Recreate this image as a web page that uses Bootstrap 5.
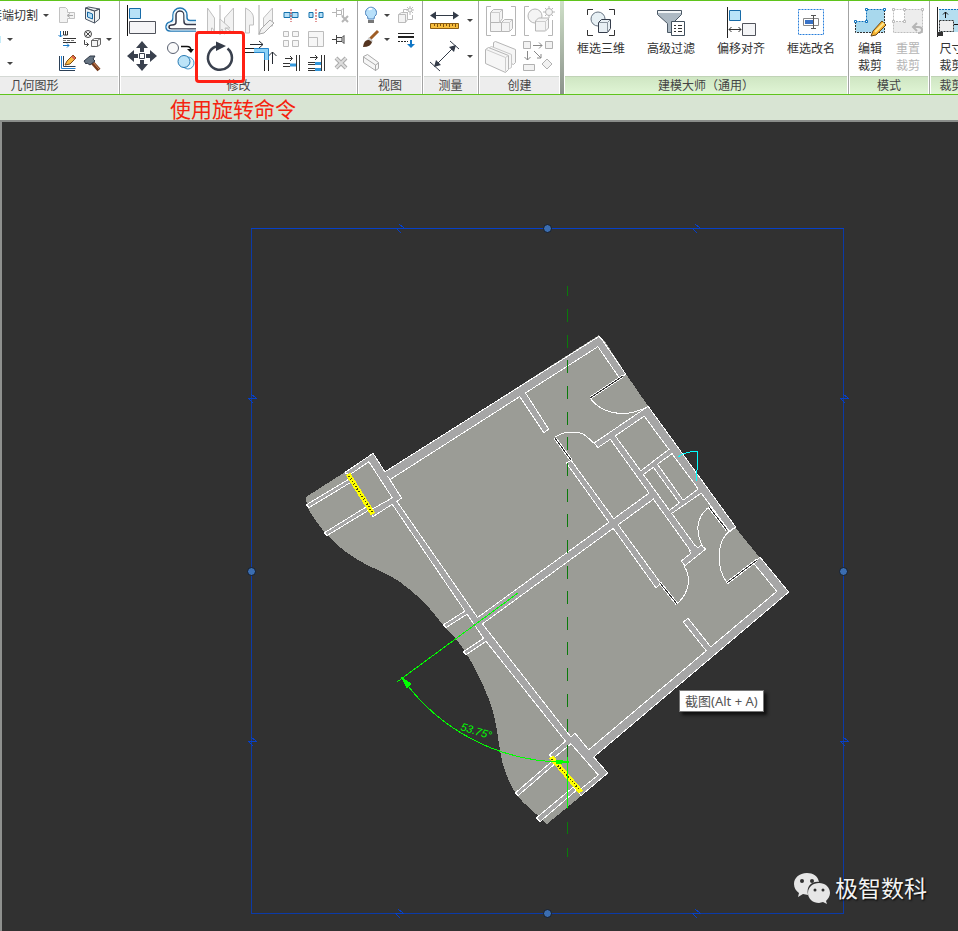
<!DOCTYPE html>
<html lang="zh-CN">
<head>
<meta charset="utf-8">
<meta name="viewport" content="width=device-width, initial-scale=1">
<title>使用旋转命令</title>
<link rel="stylesheet" href="https://cdn.jsdelivr.net/npm/bootstrap@5.3.0/dist/css/bootstrap.min.css">
<style>
body{font-family:"Noto Sans","Noto Sans CJK SC",sans-serif;font-size:12px;line-height:17px;color:#333;background:#313131}
.ribbon{border-top:1px solid #5fc41c;border-bottom:1px solid #5fc41c;height:95px;background:#fff}
.panel{border-right:1px solid #a3a3a3}
.panel-body{height:75px;padding:1px 2px 0;display:flex;align-items:flex-start}
.panel-title{height:18px;margin:0 1px;background:#ededed;border-top:1px solid #d5d9d5;white-space:nowrap;color:#444}
.green .panel-title{background:linear-gradient(#cfe6c3,#e0f5d5);border-top-color:#c0d3b6}
.p-geo{width:170px;margin-left:-50px}
.p-mod{width:238px}
.p-view{width:65px}
.p-measure{width:56px}
.p-create{width:81px;border-right:0}
.p-master{width:285px}
.p-mode{width:81px}
.p-size{width:44px}
.divider{width:4px;background:linear-gradient(#cfe0c8,#8b928b)}
.tool{border:0;background:none;padding:0;color:inherit;display:flex;align-items:center;justify-content:center}
.tool svg,.labelled svg{display:block;overflow:visible}
.grid-big{display:grid;grid-template-columns:repeat(4,39px);grid-auto-rows:36px}
.grid-two{display:grid;grid-template-columns:repeat(2,38px);grid-auto-rows:36px}
.grid-small{display:grid;grid-template-columns:repeat(3,25px);grid-auto-rows:24px;padding-top:1px}
.grid-view{display:grid;grid-template-columns:20px 12px 26px;grid-auto-rows:24px;padding-top:1px}
.cut-list{width:102px;padding-top:1px}
.cut-row{height:24px}
.cut-row .menu-btn{width:16px}
.cut-row.short{padding-right:36px}
.grid-geo{display:grid;grid-template-columns:25px 25px 10px;grid-auto-rows:24px;padding-top:1px}
.grid-measure{display:grid;grid-template-columns:38px 12px;grid-auto-rows:36px}
.labelled{border:0;background:none;padding:4px 0 0;color:inherit;line-height:17px}
.labelled svg{margin:0 auto 2px}
.w70{width:70px}.w38{width:38px}
.off{color:#b5b5b5}
.caret{width:0;height:0;border:3px solid transparent;border-top-color:#444;border-bottom:0}
.picked{position:relative}
.picked::after{content:"";position:absolute;left:-5px;top:-7px;width:50px;height:52px;border:3px solid #ff2014;border-radius:4px;z-index:2}
.hint{height:27px;background:#d8e4d3;border-bottom:2px solid #8a8d8a;color:#f5230f;font-size:21px;line-height:28px;padding-left:170px}
.stage{position:relative;border-left:2px solid #8f918f;background:#313131}
.tip{position:absolute;left:677px;top:568px;border:1px solid #777;background:#fff;color:#555;font-size:13px;line-height:18px;padding:1px 5px;box-shadow:3px 3px 3px #111;white-space:nowrap}
.brand{position:absolute;right:31px;bottom:25px;font-size:23px;line-height:36px;color:#f2f2f2;text-shadow:1px 1px 2px #000}
</style>
<script src="https://cdn.jsdelivr.net/npm/bootstrap@5.3.0/dist/js/bootstrap.bundle.min.js"></script>
</head>
<body class="d-flex flex-column min-vh-100">
<header class="ribbon d-flex overflow-hidden flex-shrink-0">
 <section class="panel p-geo flex-shrink-0">
  <div class="panel-body">
   <div class="cut-list flex-shrink-0">
    <div class="cut-row d-flex justify-content-end">
     <button class="tool text-nowrap">连接端切割</button>
     <button class="tool menu-btn" aria-label="切割选项"><span class="caret"></span></button>
    </div>
    <div class="cut-row short d-flex justify-content-end">
     <button class="tool" aria-label="剪切"><svg width="16" height="16"><path d="M4 5h10v7H4z" fill="#bfeaf8" stroke="#8cd8f0"/></svg></button>
     <button class="tool menu-btn" aria-label="剪切选项"><span class="caret"></span></button>
    </div>
    <div class="cut-row short d-flex justify-content-end">
     <button class="tool" aria-label="连接"><svg width="16" height="16"><path d="M4 4.500h10M4 8.500h10M4 12.500h10" stroke="#1b6daf"/></svg></button>
     <button class="tool menu-btn" aria-label="连接选项"><span class="caret"></span></button>
    </div>
   </div>
   <div class="grid-geo">
    <button class="tool" aria-label="拆分面"><svg width="20" height="20" fill="#f3f3f3" stroke="#c2c2c2"><path d="M2.500 2.500h6l2 2v3h7v6h-7v4h-8z"/><path d="M16 10.500h-5m2-2l-3 2 3 2" fill="none" stroke="#aaa"/></svg></button>
    <button class="tool" aria-label="洞口"><svg width="20" height="20"><path d="M3.500 3l9 3v12l-9-4zM3.500 3l3-1 11 2-5 2zM12.500 6l5-2v10l-5 4z" fill="#eef1f2" stroke="#4b5563"/><path d="M5.500 7l5 2v5l-5-2z" fill="#b5def5" stroke="#1467a5"/></svg></button>
    <span></span>
    <button class="tool" aria-label="梁连接"><svg width="20" height="20" fill="none"><path d="M3.500 2v6m-2-2l2 2 2-2M6 16.500h6m-2-2l2 2-2 2" stroke="#1678c8"/><path d="M6.500 2v4h4V2m-2 0v4M6 9.500h13M6 13.500h13" stroke="#333"/><path d="M6 11.500h12" stroke="#777" stroke-dasharray="3 1"/></svg></button>
    <button class="tool" aria-label="墙连接"><svg width="20" height="20" fill="#f5f5f5" stroke="#444"><circle cx="6" cy="5" r="3.500"/><path d="M3.500 2.500l5 5M8.500 2.500l-5 5M2.500 11v4.500h4m-2-2l2 2-2 2" fill="none"/><path d="M9.500 11.500l3-2h6v6l-3 2h-6zM9.500 11.500h6v6m0-6l3-2" stroke="#666"/></svg></button>
    <button class="tool" aria-label="墙连接选项"><span class="caret"></span></button>
    <button class="tool" aria-label="编辑连接"><svg width="20" height="20" fill="none"><path d="M2.500 3v14.500H18M6.500 3v10.500h12" stroke="#2b3f56"/><path d="M4.500 3v12.500h14" stroke="#2183d5"/><path d="M8 12l2-4 6-6 3 3-6 6z" fill="#f7bb46" stroke="#7e4c13"/><path d="M15 3l3 3" stroke="#d85b51" stroke-width="2"/></svg></button>
    <button class="tool" aria-label="拆除"><svg width="20" height="20"><path d="M9 8l8 9" stroke="#753b1e" stroke-width="4"/><path d="M10 8l7 8" stroke="#d89160"/><path d="M2 8l6-5h5l-2 3 2 2-5 4-3-2-1 1z" fill="#667482" stroke="#303947"/></svg></button>
   </div>
  </div>
  <div class="panel-title text-center">几何图形</div>
 </section>

 <section class="panel p-mod flex-shrink-0">
  <div class="panel-body">
   <div class="grid-big flex-shrink-0">
    <button class="tool" aria-label="对齐"><svg width="36" height="36"><path d="M3.500 3v31" stroke="#111"/><path d="M5.500 6.500h11v10h-11z" fill="#b8e2f7" stroke="#176ba8"/><path d="M5.500 19.500h26v12h-26z" fill="#f5f5f7" stroke="#50535b"/></svg></button>
    <button class="tool" aria-label="偏移"><svg width="36" height="36" fill="none"><path d="M33 18.500h-6q-3 0-3-3V13a7 7 0 0 0-14 0v3q0 3-3 4-4 1-4 5 0 4 4 4h26" stroke="#2378b5" stroke-width="1.500"/><path d="M33 22.500h-9q-3 0-3-3V13a4 4 0 0 0-8 0v7q0 3-4 3-3 0-3 2t3 2h24" stroke="#35394a" stroke-width="1.500"/><path d="M33 20.500h-8q-3 0-3-3V13a5.500 5.500 0 0 0-11 0v6q0 2-4 2-3 1-3 4 0 3 4 3h25" stroke="#def1fb"/></svg></button>
    <button class="tool" aria-label="镜像 拾取轴"><svg width="36" height="36" fill="#f2f2f2" stroke="#c0c0c0"><path d="M5.500 6l7 10v14l-2-4h-1v5h-4zM31.500 6l-9 10v9l9 6z"/><path d="M18 3v30" stroke="#aaa"/><path d="M18 17l10 9h-5l2 5-3 1-2-5-2 3z"/></svg></button>
    <button class="tool" aria-label="镜像 绘制轴"><svg width="36" height="36" fill="#f2f2f2" stroke="#c0c0c0"><path d="M4.500 6q8 4 8 10v7h-4v8h-4zM31.500 6l-9 10v8h9z"/><path d="M18 3v30" stroke="#aaa"/><path d="M18 32l2-5 9-9 4 3-10 10z" stroke="#aaa"/></svg></button>
    <button class="tool" aria-label="移动"><svg width="36" height="36" fill="#3a414e"><path d="M18 3l6 7h-4v4h-4v-4h-4zM18 33l6-7h-4v-4h-4v4h-4zM3 18l7-6v4h4v4h-4v4zM33 18l-7-6v4h-4v4h4v4z"/><path d="M15.500 15.500h5v5h-5z" fill="#fff" stroke="#3a414e"/></svg></button>
    <button class="tool" aria-label="复制"><svg width="36" height="36" fill="none"><circle cx="10" cy="10" r="5.500" fill="#fafafa" stroke="#596070"/><path d="M18 8.500h6q4 0 4 4" stroke="#111" stroke-width="1.500"/><path d="M24 11h7l-3 4z" fill="#111"/><circle cx="25" cy="25" r="6" fill="#e9f8ff" stroke="#4996c9"/><circle cx="21" cy="23.500" r="6" fill="#bce4f8" stroke="#2478b2"/></svg></button>
    <button class="tool picked" aria-label="旋转"><svg width="36" height="36"><path d="M25.500 10.500A12 12 0 1 1 14 8.500" fill="none" stroke="#3a414e" stroke-width="2.500"/><path d="M14 3.500l10 4.500-10 5z" fill="#343b48"/></svg></button>
    <button class="tool" aria-label="修剪"><svg width="36" height="36" fill="none"><path d="M9 6.500h13M18 3l4 3.500-4 3.500M31.500 26V14m-4 4l4-4 4 4" stroke="#252a32"/><path d="M2 10.500h11M2 14.500h11M23.500 22v11M27.500 22v11" stroke="#222"/><path d="M13 12.500h12.500V22" stroke="#8bd1f6" stroke-width="4"/><path d="M13 10.500h14.500V22M13 14.500h10.500V22" stroke="#2684c9"/></svg></button>
   </div>
   <div class="grid-small flex-shrink-0">
    <button class="tool" aria-label="拆分图元"><svg width="18" height="18"><path d="M2 6.500h6v5H2zM10 6.500h6v5h-6z" fill="#b6e0f7" stroke="#1672ad"/><path d="M9 3v13" stroke="#c43030" stroke-dasharray="2 1"/></svg></button>
    <button class="tool" aria-label="用间隙拆分"><svg width="18" height="18"><path d="M2 6.500h4v5H2zM12 6.500h4v5h-4z" fill="#b6e0f7" stroke="#1672ad"/><path d="M9 3v13" stroke="#c43030" stroke-dasharray="2 1"/></svg></button>
    <button class="tool" aria-label="解锁"><svg width="20" height="20" fill="none" stroke="#b6b6b6"><path d="M1 7.500h4M5.500 3v9M5.500 5.500h5v4h-5M12.500 3v9M10 5.500l2-2M10 9.500l2 2"/><path d="M11 11l6 6m0-6l-6 6" stroke-width="2"/></svg></button>
    <button class="tool" aria-label="阵列"><svg width="18" height="18" fill="#f6f6f6" stroke="#bcbcbc"><path d="M1.500 1.500h5v5h-5zM10.500 1.500h6v5h-6zM1.500 10.500h5v6h-5zM10.500 10.500h6v6h-6z"/></svg></button>
    <button class="tool" aria-label="缩放"><svg width="18" height="18" fill="#f6f6f6" stroke="#bcbcbc"><path d="M1.500 1.500h15v15h-15zM1.500 7.500h9v9h-9z"/></svg></button>
    <button class="tool" aria-label="锁定"><svg width="18" height="18" fill="#eee" stroke="#444"><path d="M0 9.500h4M4.500 5v9M5 7.500h5v4H5M10 7.500l2-2v8l-2-2"/></svg></button>
    <button class="tool" aria-label="修剪单个图元"><svg width="18" height="18" fill="none"><path d="M3 4.500h7M8 2l2.500 2.500L8 7M1 9.500h7M1 12.500h7M14.500 1v16M17.500 1v16" stroke="#333"/><path d="M8 11h6" stroke="#3498dc" stroke-width="3"/></svg></button>
    <button class="tool" aria-label="修剪多个图元"><svg width="18" height="18" fill="none"><path d="M3 3.500h7M8 1l2.500 2.500L8 6M1 8.500h7M1 10.500h7M1 14.500h7M1 16.500h7M14.500 1v16M17.500 1v16" stroke="#333"/><path d="M8 9.500h6M8 15.500h6" stroke="#3498dc" stroke-width="3"/></svg></button>
    <button class="tool" aria-label="删除"><svg width="18" height="18"><path d="M4 4l10 10m0-10L4 14" stroke="#aaa" stroke-width="4"/><path d="M4 4l10 10m0-10L4 14" stroke="#ddd" stroke-width="2"/></svg></button>
   </div>
  </div>
  <div class="panel-title text-center">修改</div>
 </section>

 <section class="panel p-view flex-shrink-0">
  <div class="panel-body justify-content-center"><div class="grid-view">
   <button class="tool" aria-label="隐藏"><svg width="20" height="20"><path d="M7 14q0-3-2-4a5.500 5.500 0 1 1 10 0q-2 1-2 4z" fill="#b8e0fa" stroke="#4c83bd"/><path d="M8 5q1-2 3-1" stroke="#fff" stroke-width="2" fill="none"/><path d="M7 15h6v3H7z" fill="#777"/></svg></button>
   <button class="tool" aria-label="隐藏选项"><span class="caret"></span></button>
   <button class="tool" aria-label="置换"><svg width="20" height="20" fill="#f3f3f3" stroke="#bcbcbc"><path d="M2.500 9.500l3-2h6v7l-2 3h-7zM2.500 9.500h7v8"/><path d="M7.500 7V4.500h5M16.500 10v4.500h-5" fill="none"/><path d="M14 1v9m-4-5h8m-7-3l6 6m0-6l-6 6" fill="none"/><circle cx="14" cy="5" r="2"/></svg></button>
   <button class="tool" aria-label="替换"><svg width="20" height="20"><path d="M9 10l8-8" stroke="#9f5d25" stroke-width="3"/><path d="M8 8l4 4-2 2-4-3z" fill="#ccc"/><path d="M2 18q1-8 6-7l3 2q-1 5-9 5z" fill="#54341f"/></svg></button>
   <button class="tool" aria-label="替换选项"><span class="caret"></span></button>
   <button class="tool" aria-label="线处理"><svg width="20" height="20"><path d="M2 4.500h16" stroke="#222"/><path d="M2 8h16" stroke="#222" stroke-width="2"/><path d="M2 12.500h10" stroke="#222" stroke-dasharray="2 1"/><path d="M14 11h2v4h3l-4 4-4-4h3z" fill="#1177c5"/></svg></button>
   <button class="tool" aria-label="选择框"><svg width="20" height="20" fill="#f6f6f6" stroke="#aaa"><path d="M2.500 3.500l4-2 11 8v6l-3 2-12-8zM2.500 4l12 8v6m0-6l3-2"/></svg></button>
  </div></div>
  <div class="panel-title text-center">视图</div>
 </section>

 <section class="panel p-measure flex-shrink-0">
  <div class="panel-body justify-content-center"><div class="grid-measure">
   <button class="tool" aria-label="测量"><svg width="36" height="36"><path d="M6 13.500h24" stroke="#333b48"/><path d="M3 13.500l6-4v8zM32 13.500l-6-4v8z" fill="#333b48"/><path d="M3.500 21.500h28v5h-28z" fill="#f7bd3d" stroke="#8b5c12"/><path d="M7.500 22v2m3-2v3m3-3v2m3-2v3m3-3v2m3-2v3m3-3v2m3-2v3" stroke="#80530e"/></svg></button>
   <button class="tool" aria-label="测量选项"><span class="caret"></span></button>
   <button class="tool" aria-label="对齐尺寸标注"><svg width="36" height="36"><path d="M9 27L27 9M3 24l10 9M23 3l9 8" stroke="#333b48"/><path d="M7 29l2-7 5 5zM29 7l-7 2 5 5z" fill="#333b48"/></svg></button>
   <button class="tool" aria-label="尺寸标注选项"><span class="caret"></span></button>
  </div></div>
  <div class="panel-title text-center">测量</div>
 </section>

 <section class="panel p-create flex-shrink-0">
  <div class="panel-body justify-content-center"><div class="grid-two">
   <button class="tool" aria-label="创建部件"><svg width="34" height="36" fill="#f4f4f4" stroke="#b6b6b6"><path d="M7 4.500H2.500v29H7M27 4.500h4.500v29H27" fill="none"/><path d="M6.500 10.500l3-3h9v9l-3 4h-9zM6.500 20.500h11v9h-11zM17.500 20.500l3-3h8v9l-3 3h-8z"/><path d="M7 10.500h8.500v10M18 20.500h7.500v9M15.500 10.500l3-3M25.500 20.500l3-3" fill="none" stroke="#ccc"/></svg></button>
   <button class="tool" aria-label="创建组"><svg width="34" height="36" fill="#f4f4f4" stroke="#b6b6b6"><path d="M7 4.500H2.500v29H7M30.500 18v15.500H26" fill="none"/><circle cx="13" cy="14" r="7"/><path d="M13.500 19l3-3h10v10l-3 3h-10z"/><path d="M14 19.500h9.500v9m0-9l3-3" fill="none" stroke="#ccc"/><path d="M27 4v12m-6-6h12M23 6l8 8m0-8l-8 8"/><circle cx="27" cy="10" r="3.500"/></svg></button>
   <button class="tool" aria-label="创建零件"><svg width="36" height="36" fill="#f6f6f6" stroke="#b6b6b6"><path d="M10.500 4.500l2-1 20 8v13l-2 2-20-8z"/><path d="M6.500 9.500l2-1 20 8v13l-2 1-20-8z" stroke="#c8c8c8"/><path d="M2.500 11.500l3-2 20 8v14l-3 3-20-9z"/><path d="M3 11.500l19.500 8v14m0-14l3-2" fill="none" stroke="#ccc"/></svg></button>
   <button class="tool" aria-label="创建组件"><svg width="34" height="36" fill="#f2f2f2" stroke="#b1b1b1"><path d="M1.500 3.500h7v7h-7zM23.500 3.500h7v7h-7zM1.500 26.500h11v6h-11zM25 21l5 5-5 5-5-5z"/><path d="M11 7.500h9m-3-3l3 3-3 3M5.500 13v9m-3-3l3 3 3-3M12 13l7 7m-4 0h4v-4" fill="none" stroke="#888"/></svg></button>
  </div></div>
  <div class="panel-title text-center">创建</div>
 </section>
 <div class="divider flex-shrink-0"></div>

 <section class="panel green p-master flex-shrink-0">
  <div class="panel-body">
   <button class="labelled w70"><svg width="32" height="32" fill="none"><path d="M8 3.500H2.500V9M24 3.500h5.500V9M2.500 24v5.500H8M29.500 24v5.500H24" stroke="#333"/><circle cx="13" cy="13" r="7" fill="#e7f0f5" stroke="#687583"/><path d="M13.500 16.500l3-3h9v9l-3 4h-9z" fill="#e8eff4" stroke="#353d4b"/><path d="M14 16.500h8.500v10m0-10l3-3" stroke="#8a949e"/></svg>框选三维</button>
   <button class="labelled w70"><svg width="32" height="32"><path d="M2.500 4.500h24v4l-9 9v9h-5v-9l-10-9z" fill="#adb9c3" stroke="#4b5865"/><path d="M3 6h23" stroke="#f2f5f7" stroke-width="2"/><path d="M16.500 15.500h13v14h-13z" fill="#fff" stroke="#42505d"/><path d="M19 19.500h2m2 0h4m-8 3h2m2 0h4m-8 3h2m2 0h4" stroke="#333"/></svg>高级过滤</button>
   <button class="labelled w70"><svg width="32" height="32"><path d="M2.500 1v31" stroke="#222"/><path d="M4.500 4.500h11v10h-11z" fill="#b9e3f8" stroke="#176ba8"/><path d="M17.500 17.500h13v12h-13z" fill="#f4f5f7" stroke="#50535b"/><path d="M4 23.500h12M6.500 21L4 23.500 6.500 26m7-5l2.500 2.500-2.500 2.500" fill="none" stroke="#333"/></svg>偏移对齐</button>
   <button class="labelled w70"><svg width="32" height="32"><path d="M3.500 3.500h25v25h-25z" fill="#fff" stroke="#297fdb" stroke-dasharray="2 1"/><path d="M8.500 12.500h15v7h-15z" fill="#fff" stroke="#888"/><path d="M10 14h9v4h-9z" fill="#3972c6"/><path d="M18.500 9v14M16 9.500h5m-5 13h5" stroke="#555"/></svg>框选改名</button>
  </div>
  <div class="panel-title text-center">建模大师（通用）</div>
 </section>

 <section class="panel green p-mode flex-shrink-0">
  <div class="panel-body justify-content-center">
   <button class="labelled w38"><svg width="32" height="32"><path d="M1.500 15.500h11v-12h18v23h-29z" fill="#a8d8ed"/><path d="M1.500 15.500h11v-12h18" fill="none" stroke="#0d71bd" stroke-dasharray="2 1"/><path d="M30.500 4v22.500h-29v-11" fill="none" stroke="#333" stroke-dasharray="2 1"/><path d="M.5 14.500h2v2h-2zM11.500 14.500h2v2h-2zM11.500 2.500h2v2h-2zM29.500 2.500h2v2h-2z" fill="#fff" stroke="#0d71bd"/><path d="M17 30l2-5 9-10 4 4-10 10z" fill="#f7b32f" stroke="#674719"/><path d="M21 26l9-9" stroke="#ffe890" stroke-width="2"/></svg>编辑<br>裁剪</button>
   <button class="labelled w38 off" disabled><svg width="32" height="32"><path d="M1.500 15.500h11v-12h18v23h-29z" fill="#ededed"/><path d="M1.500 3.500h29v23h-29zM12.500 4v11.500H2" fill="none" stroke="#bdbdbd" stroke-dasharray="2 1"/><path d="M.5 2.500h2v2h-2zM11.500 2.500h2v2h-2zM29.500 2.500h2v2h-2zM.5 14.500h2v2h-2zM11.500 14.500h2v2h-2z" fill="#fff" stroke="#bbb"/><path d="M22 21h4q4 0 4 3t-4 3M25 17l-4 4 4 4" fill="none" stroke="#b5b5b5" stroke-width="2"/></svg>重置<br>裁剪</button>
  </div>
  <div class="panel-title text-center">模式</div>
 </section>
 <section class="panel green p-size flex-shrink-0">
  <div class="panel-body justify-content-center">
   <button class="labelled w38"><svg width="32" height="32"><path d="M3 3h29v23H3z" fill="#b5def0"/><path d="M3 3.500h29" stroke="#0d71bd" stroke-dasharray="2 1"/><path d="M1.500 1v30" stroke="#222"/><path d="M1 26h6v4H1z" fill="#333"/><path d="M3.500 14.500h14v11h-14z" fill="#eee" stroke="#333" stroke-dasharray="2 1"/><path d="M9.500 12V6M7 8.500L9.500 6 12 8.500M18 18.500h12" fill="none" stroke="#111"/></svg>尺寸<br>裁剪</button>
  </div>
  <div class="panel-title text-center">裁剪</div>
 </section>
</header>
<div class="hint flex-shrink-0">使用旋转命令</div>
<main class="stage flex-grow-1">
<svg class="d-block w-100" viewBox="2 122 956 809" role="img" aria-label="旋转后的平面图">
 <defs>
  <g id="walls">
   <path d="M345 473L373 454 401 498 393 503 393 498 369 461 350 474Z"/><path d="M401 498L373 516 370 511 393 498Z"/>
   <path d="M384 473L599 337 603 342 598 346 390 479Z"/><path d="M601 339L625 374 620 378 598 346Z"/>
   <path d="M648 407L735 527 730 531 644 415Z"/><path d="M648 407L595 443 598 447 645 415Z"/>
   <path d="M610 438L614 435 697 549 692 552Z"/><path d="M701 546L705 549 685 565 682 561Z"/><path d="M690 551L695 546 699 549 694 556Z"/>
   <path d="M640 472L669 450 672 453 642 475Z"/><path d="M653 466L656 463 683 501 680 503Z"/><path d="M668 512L699 489 702 492 670 514Z"/>
   <path d="M650 493L654 498 480 625 475 620Z"/><path d="M567 463L571 461 660 583 656 587Z"/>
   <path d="M520 396L525 393 548 429 544 432Z"/><path d="M392 503L396 501 478 619 571 738 566 741 484 638 473 622Z"/>
   <path d="M444 625L466 611 468 613 446 627Z"/><path d="M464 652L485 638 487 640 466 654Z"/>
   <path d="M550 755L575 734 589 751 593 757 607 773 581 795 579 791 599 775 571 743 553 758Z"/>
   <path d="M788 592L593 757 588 751 778 591Z"/><path d="M760 558L788 592 778 592 754 563Z"/>
   <path d="M684 622L688 619 711 648 707 651Z"/>
   <path d="M307 505L350 479 352 481 309 507Z"/><path d="M325 533L367 507 368 510 327 535Z"/>
   <path d="M516 793L552 762 554 764 518 795Z"/><path d="M537 818L573 788 576 790 540 821Z"/>
  </g>
  <path id="brk" d="M-1-5L4-1H-4L1 4" fill="none"/>
 </defs>
 <g shape-rendering="crispEdges">
  <path fill="#9b9c96" d="M306 497L345 472 373 454 385 472 599 335 606 343 626 374 648 406 735 527 760 558 789 592 593 757 608 773 581 796 547 824C538 815 524 805 516 794 508 782 502 765 500 750 497 735 497 720 488 697 482 682 474 666 466 653 459 641 451 634 443 625 432 611 424 600 400 582 390 575 380 571 367 565 350 556 338 547 327 535 319 526 310 513 307 506Z"/>
  <use href="#walls" fill="#fff" stroke="#fff" stroke-width="2" stroke-linejoin="bevel"/>
  <use href="#walls" fill="#a6a6a6"/>
  <g fill="none" stroke="#fff">
   <path d="M590 398C600 412 622 419 645 408M555 437C566 430 580 431 586 436L596 445M677 604C692 590 690 575 684 566M709 507C696 517 695 532 703 547M727 583C715 565 716 538 734 528"/>
   <path stroke-width="3" d="M590 398L623 376M555 438L571 460M660 583L677 604M709 507L727 530M727 583L757 560"/>
   <path stroke="#333" d="M590 398L623 376M555 438L571 460M660 583L677 604M709 507L727 530M727 583L757 560"/>
  </g>
  <path stroke="#ff0" stroke-width="5" d="M348 474L373 514M551 757L581 792"/>
  <path stroke="#444400" stroke-width="2" stroke-dasharray="1 2" d="M349 476L372 512M552 759L580 790"/>
  <path fill="none" stroke="#0ff" d="M678 457Q686 451 697.500 451.500V460L696.500 481"/>
  <path stroke="#0a7a0a" d="M567.500 286v10M567.500 822v12M567.500 848v9"/>
  <path stroke="#0a7a0a" stroke-dasharray="13 12.650" d="M567.500 309V811"/>
  <g stroke="#0f0" fill="none">
   <path d="M397 682L518 593M402 678A200 200 0 0 0 569 762M567.500 757v51"/>
   <path fill="#0f0" d="M402 678L411 684 407 688ZM569 762L556 760V764Z"/>
  </g>
  <path fill="none" stroke="#0b3aa8" d="M251.500 228V913.500H843.500V228"/>
  <path stroke="#0640c8" d="M251 228.500H844"/>
  <g stroke="#0640c8">
   <use href="#brk" x="400" y="229"/><use href="#brk" x="696" y="229"/><use href="#brk" x="399" y="914"/><use href="#brk" x="696" y="914"/>
   <use href="#brk" x="252" y="399"/><use href="#brk" x="252" y="742"/><use href="#brk" x="844" y="399"/><use href="#brk" x="844" y="742"/>
  </g>
 </g>
 <g fill="#3b6db0" stroke="#151b25"><circle cx="547.500" cy="228.500" r="4"/><circle cx="251.500" cy="571.500" r="4"/><circle cx="843.500" cy="571.500" r="4"/><circle cx="547.500" cy="913.500" r="4"/></g>
 <text x="460" y="730" transform="rotate(17 460 730)" fill="#0f0" font-family="Liberation Sans, sans-serif" font-size="11" font-style="italic">53.75°</text>
</svg>
<div class="tip" role="tooltip">截图(Alt + A)</div>
<div class="brand d-flex align-items-center gap-1">
 <svg width="38" height="36" fill="#e6e6e6"><path d="M14 3C6 3 1 8 1 14c0 4 2 7 5 9l-1 4 5-3 5 1C13 16 19 11 26 12 25 6 20 3 14 3Z"/><path d="M26 13c-6 0-11 4-11 10s5 10 11 10l4-1 4 2-1-3c2-2 4-5 4-8 0-6-5-10-11-10Z"/><g fill="#313131"><circle cx="9" cy="11" r="2"/><circle cx="19" cy="11" r="2"/><circle cx="22" cy="20" r="1.500"/><circle cx="30" cy="20" r="1.500"/></g></svg>
 <span>极智数科</span>
</div>
</main>
</body>
</html>
